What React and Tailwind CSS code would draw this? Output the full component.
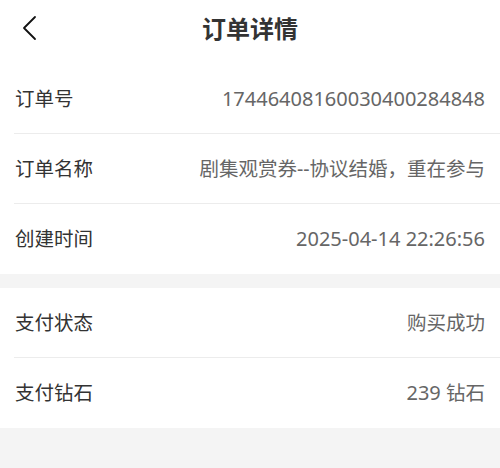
export default function App() {
  const font = { fontFamily: '"Noto Sans", "Noto Sans CJK SC", sans-serif' };
  const Row = ({ label, children, last }) => (
    <div className={"ml-[14px] h-[70px] flex items-center justify-between pr-[15px] " + (last ? "" : "border-b border-[#ececec]")}>
      <span className="pl-[1px] text-[19.5px] text-[#333333]">{label}</span>
      <span className="text-[19.5px] text-[#666666] whitespace-nowrap">{children}</span>
    </div>
  );
  return (
    <div className="w-[500px] h-[468px] bg-[#f4f4f4] flex flex-col" style={font}>
      <div className="h-[64px] bg-white flex items-center justify-center relative">
        <svg className="absolute left-[20px] top-[15px]" width="18" height="26" viewBox="0 0 18 26" fill="none">
          <path d="M15 2 L4 13 L15 24" stroke="#111" strokeWidth="1.8" strokeLinecap="round" strokeLinejoin="round" />
        </svg>
        <span className="text-[24px] font-semibold text-[#333333] -mt-[8px]" style={{ fontFamily: '"Noto Sans CJK SC", sans-serif' }}>订单详情</span>
      </div>
      <div className="bg-white">
        <Row label="订单号"><span className="text-[20px]">17446408160030400284848</span></Row>
        <Row label="订单名称">剧集观赏券--协议结婚，重在参与</Row>
        <Row label="创建时间" last><span className="text-[20px]">2025-04-14 22:26:56</span></Row>
      </div>
      <div className="h-[14px]" />
      <div className="bg-white">
        <Row label="支付状态">购买成功</Row>
        <Row label="支付钻石" last><span className="text-[20px]">239 </span>钻石</Row>
      </div>
    </div>
  );
}
